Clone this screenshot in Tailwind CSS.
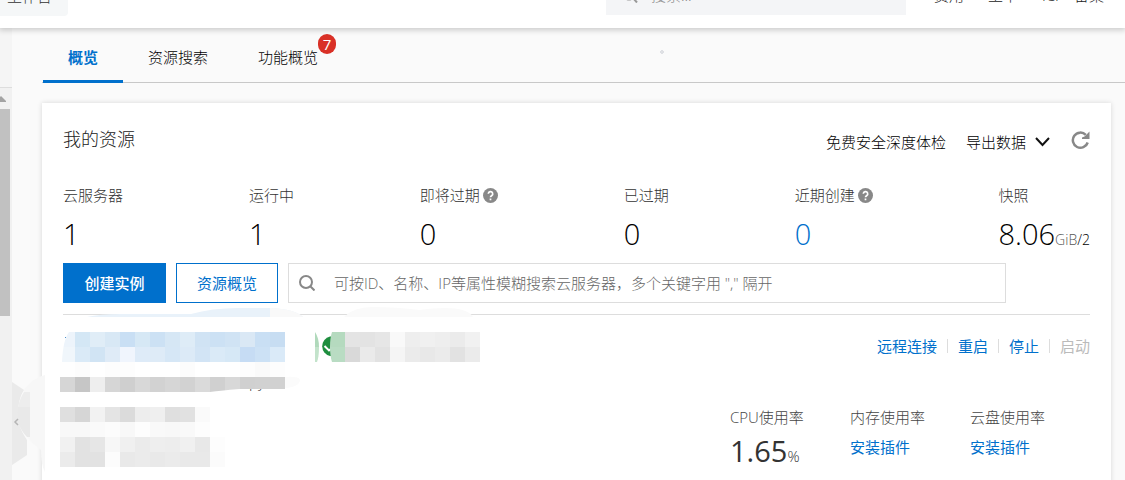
<!DOCTYPE html>
<html lang="zh-CN">
<head>
<meta charset="utf-8">
<meta name="viewport" content="width=device-width, initial-scale=1">
<title>概览</title>
<script src="https://cdn.jsdelivr.net/npm/@tailwindcss/browser@4"></script>
</head>
<body class="flex h-screen flex-col overflow-hidden bg-[#fafafa] font-['Open_Sans','Noto_Sans_CJK_SC',sans-serif] text-[15px] leading-6 font-light text-[#222]">

<!-- Top bar, scrolled partly out of view -->
<header class="relative z-10 -mt-[22px] flex h-[50px] shrink-0 items-start bg-white shadow-[0_1px_6px_1px_rgba(0,0,0,0.2)]">
  <a href="#" class="flex h-[38px] w-[68px] items-center rounded-br-sm bg-[#f5f7f8] pl-[7px] pb-[2px] text-[#333]">工作台</a>
  <label class="ml-auto flex h-[37px] w-[300px] items-center gap-[13px] bg-[#f4f5f7] pl-4 pb-[3px]">
    <svg class="size-4 shrink-0" viewBox="0 0 16 16" fill="none" stroke="#999" stroke-width="2"><circle cx="7" cy="7" r="5.5"/><path d="M11 11l4 4.5"/></svg>
    <input type="text" aria-label="搜索" placeholder="搜索..." class="w-full bg-transparent outline-none placeholder:text-[#888]">
  </label>
  <nav class="ml-[27px] mr-[21px] flex h-[34px] items-center gap-6 pl-px whitespace-nowrap text-[#222]">
    <a href="#">费用</a><a href="#">工单</a><a href="#" class="flex w-[62px] justify-between"><span>ICP</span> <span>备案</span></a>
  </nav>
</header>

<div class="flex min-h-0 flex-1">
  <!-- Sidebar edge with its scrollbar -->
  <aside class="relative flex w-3 shrink-0 flex-col bg-[#f1f1f1]">
    <div class="h-[60px] border-b border-[#ddd] bg-[#f5f5f5]"></div>
    <svg class="mt-2 h-[6px] w-[6px]" viewBox="0 0 6 6" fill="#a3a3a3"><path d="M0 1L1 0L6 5V6H0z"/></svg>
    <div class="mt-[7px] h-[207px] w-[10px] bg-[#c1c1c1]"></div>
    <svg class="absolute left-3 top-[346px] z-10 h-[100px] w-[33px]" viewBox="12 374 33 100">
      <path d="M24 390Q34 377 45 375V472Q41 465 41 450Q34 445 27 437z" fill="#f7f7f7"/>
      <path d="M12 382L24 390Q17 400 18 422Q22 433 27 440V455L12 465z" fill="#eaeaea"/>
      <path d="M24 392H30V407H18Q20 398 24 392z" fill="#ededed"/>
      <path d="M18 407H30V437H27Q20 430 17 420z" fill="#e9e9e9"/>
      <path d="M18 419L15 422L18 425" fill="none" stroke="#b5b5b5" stroke-width="1.5"/>
    </svg>
  </aside>

  <main class="min-w-0 flex-1 pl-[30px]">
    <nav class="relative flex h-[55px] border-b border-[#c8c8c8] pl-px text-black">
      <a href="#" class="-mb-px flex items-center border-b-3 border-[#0070cc] px-[25px] pt-[5px] font-semibold text-[#0070cc]">概览</a>
      <a href="#" class="flex items-center px-[25px] pt-[3px]">资源搜索</a>
      <a href="#" class="relative flex items-center px-[25px] pt-[3px]">功能概览<span class="absolute right-[7px] top-[6px] flex h-5 w-[18px] items-center justify-center rounded-full bg-[#d93026] font-normal text-white">7</span></a>
      <svg class="absolute left-[617px] top-[21px] size-[6px]" viewBox="0 0 6 6" fill="none" stroke="#cdd0d6"><circle cx="3" cy="3" r="1.3"/></svg>
    </nav>

    <section class="relative mr-[14px] mt-5 min-h-[400px] bg-white px-[21px] pt-[21px] shadow-[0_0_5px_rgba(0,0,0,0.14)]">
      <div class="flex h-8 items-center">
        <h1 class="-mt-[2px] text-[18px]">我的资源</h1>
        <div class="ml-auto flex items-center pt-1 text-black">
          <a href="#">免费安全深度体检</a>
          <button type="button" class="ml-5 flex items-center gap-[9px]">导出数据
            <svg class="h-[10px] w-[15px]" viewBox="0 0 15 10" fill="none" stroke="#111" stroke-width="2"><path d="M1 1L7.500 8L14 1"/></svg>
          </button>
          <button type="button" aria-label="刷新" class="-mt-[3px] ml-[21px]">
            <svg class="size-[19px]" viewBox="0 0 19 19"><path d="M14.800 3.800A7.600 7.600 0 1 0 16.700 11.500" fill="none" stroke="#888" stroke-width="2.500"/><path d="M18.500 0.500V8H11V6.500L13.500 5.500z" fill="#888"/></svg>
          </button>
        </div>
      </div>

      <dl class="mt-[27px] flex justify-between text-[#333]">
        <div><dt>云服务器</dt><dd class="mt-[7px] h-10 text-[29px] leading-10 text-black">1</dd></div>
        <div><dt>运行中</dt><dd class="mt-[7px] h-10 text-[29px] leading-10 text-black">1</dd></div>
        <div><dt class="flex items-center gap-[3px]">即将过期<svg class="size-[15px]" viewBox="0 0 15 15"><circle cx="7.500" cy="7.500" r="7.500" fill="#888"/><path d="M5.300 5.800a2.200 2.200 0 1 1 3.300 1.900c-.8.500-1.100.8-1.100 1.600M7.500 10.500v1.700" fill="none" stroke="#fff" stroke-width="1.700"/></svg></dt><dd class="mt-[7px] h-10 text-[29px] leading-10 text-black">0</dd></div>
        <div><dt>已过期</dt><dd class="mt-[7px] h-10 text-[29px] leading-10 text-black">0</dd></div>
        <div><dt class="flex items-center gap-[3px]">近期创建<svg class="size-[15px]" viewBox="0 0 15 15"><circle cx="7.500" cy="7.500" r="7.500" fill="#888"/><path d="M5.300 5.800a2.200 2.200 0 1 1 3.300 1.900c-.8.500-1.100.8-1.100 1.600M7.500 10.500v1.700" fill="none" stroke="#fff" stroke-width="1.700"/></svg></dt><dd class="mt-[7px] h-10 text-[29px] leading-10 text-[#0070cc]"><a href="#">0</a></dd></div>
        <div><dt>快照</dt><dd class="mt-[7px] flex h-10 items-baseline text-[29px] leading-10 text-black">8.06<span class="text-[14px] text-[#555]">GiB</span><span class="text-[14px] text-black">/2</span></dd></div>
      </dl>

      <div class="mt-[9px] flex h-10 gap-[10px]">
        <button type="button" class="w-[103px] bg-[#0070cc] pb-px font-medium text-white">创建实例</button>
        <button type="button" class="w-[102px] border border-[#0070cc] pb-px font-normal text-[#0070cc]">资源概览</button>
        <label class="mr-[84px] flex min-w-0 flex-1 items-center gap-[19px] border border-[#ddd] pl-[10px]">
          <svg class="size-4 shrink-0" viewBox="0 0 16 16" fill="none" stroke="#888" stroke-width="2"><circle cx="7" cy="7" r="6"/><path d="M11 11l4.500 4.500"/></svg>
          <input type="text" aria-label="搜索云服务器" placeholder="可按ID、名称、IP等属性模糊搜索云服务器，多个关键字用 &quot;,&quot; 隔开" class="min-w-0 flex-1 bg-transparent outline-none placeholder:text-[#666]">
        </label>
      </div>

      <div class="relative mt-[11px] border-t border-[#ddd]">
        <svg class="absolute left-0 -top-[8px] h-[12px] w-[420px]" viewBox="63 307 420 12">
          <path d="M87 317Q100 314 120 314H191Q215 307 245 308H270Q295 309 303 317z" fill="#e9f2fa"/>
          <path d="M270 308Q295 309 303 317H270z" fill="#f9f9f9"/>
          <path d="M344 317Q354 307 372 307Q395 307 420 310Q465 304 473 317z" fill="#fafafa"/>
        </svg>
      </div>

      <article class="mt-[17px] flex justify-between">
        <!-- Pixelated instance name, status and address -->
        <svg id="masked" class="h-[135px] w-[422px] shrink-0 overflow-visible" viewBox="63 332 422 135" role="img" aria-label="实例信息">
          <defs><clipPath id="line"><path d="M240 380H300V392H240z"/></clipPath></defs>
          <text x="249" y="388" font-size="15" fill="#333" clip-path="url(#line)">py</text>
          <g id="cells" shape-rendering="crispEdges"></g>
          <path d="M60 332H69Q63 340 62 362H60z" fill="#fff"/>
          <path d="M210 392Q235 389 240 389V392.500H210z" fill="#fff"/>
          <path d="M285 377Q299 376 300 380Q299 387 285 388z" fill="#fbfbfb"/>
          <path d="M65 337h1v1h-1z" fill="#4f91cc"/>
          <path d="M315 332Q319 338 319 347H315z" fill="#b0d9bb"/>
          <path d="M315 347H319Q319 357 317 362H315z" fill="#c3e3cb"/>
          <path d="M332 336.500H330A10 10 0 0 0 330 356H332z" fill="#1e8e3e"/>
          <path d="M324.500 346L329 350.500L332 348" fill="none" stroke="#fff" stroke-width="2"/>
          <path d="M332 332H345V347H330Q330 338 332 332z" fill="#b5dabf"/>
          <path d="M330 347H345V362H332Q330 356 330 347z" fill="#b9dcc3"/>
        </svg>
        <div>
          <div class="flex items-center justify-end gap-[10px] pt-[2px] font-normal text-[#0070cc]">
            <a href="#">远程连接</a><span class="h-[14px] w-px bg-[#ddd]"></span>
            <a href="#">重启</a><span class="h-[14px] w-px bg-[#ddd]"></span>
            <a href="#">停止</a><span class="h-[14px] w-px bg-[#ddd]"></span>
            <button type="button" disabled class="text-[#bbb]">启动</button>
          </div>
          <dl class="mt-[47px] grid grid-cols-[120px_120px_120px] text-[#444]">
            <div><dt>CPU使用率</dt><dd class="mt-[2px] text-[29px] leading-10 font-normal text-[#333]">1.65<span class="text-[15px] font-light">%</span></dd></div>
            <div><dt>内存使用率</dt><dd class="mt-[6px]"><a href="#" class="font-normal text-[#0070cc]">安装插件</a></dd></div>
            <div><dt>云盘使用率</dt><dd class="mt-[6px]"><a href="#" class="font-normal text-[#0070cc]">安装插件</a></dd></div>
          </dl>
        </div>
      </article>
    </section>
  </main>
</div>

<script>
  // Each row: left edge, top edge, height, then the fill of every 15-unit cell.
  const rows = [
    [60, 332, 15, "edf4fb d4e7f5 e0edf7 d8e8f5 c9dff4 d6e8f5 cce1f4 d6e7f5 deecf7 d0e3f4 cce1f4 d0e3f4 dae8f5 c9dff4 c7ddf2"],
    [60, 347, 15, "f0f6fb daeaf7 d1e4f4 dfebf7 f0f5fd deebf8 deebf7 d6e7f6 dceaf7 d2e4f5 daeaf7 d6e8f6 c6dcf4 cce1f5 daeaf8"],
    [60, 362, 15, "fefefe fcfcfc ffffff fdfdfd fdfdfd ffffff ffffff ffffff fcfcfc ffffff ffffff ffffff fdfdfd fafafa fdfdfd"],
    [60, 377, 15, "d6d6d6 c6c6c6 eeeeee d6d6d6 cfcfcf d8d8d8 d2d2d2 d6d6d6 d2d2d2 dadada d0d0d0 d8d8d8"],
    [240, 377, 12, "d0d0d0 d1d1d1 d1d1d1"],
    [60, 407, 15, "dfdfdf d6d6d6 f2f2f2 e4e4e4 dbdbdb ededed efefef dfdfdf e1e1e1 fafafa"],
    [60, 422, 15, "f8f8f8 f8f8f8 fafafa fcfcfc f8f8f8 fdfdfd f9f9f9 f8f8f8 f9f9f9 fdfdfd"],
    [60, 437, 15, "f1f1f1 e2e2e2 e6e6e6 f7f7f7 f0f0f0 ebebeb eeeeee ededed f0f0f0 e8e8e8 fdfdfd"],
    [60, 452, 15, "ebebeb e2e2e2 e2e2e2 fcfcfc e9e9e9 ebebeb e9e9e9 ebebeb e9e9e9 e9e9e9 fbfbfb"],
    [345, 332, 15, "e4e4e4 e3e3e3 e6e6e6 f9f9f9 eeeeee f0f0f0 eeeeee ebebeb f1f1f1"],
    [345, 347, 15, "d9d9d9 eaeaea e2e2e2 f5f5f5 ebebeb e8e8e8 ebebeb e2e2e2 ebebeb"]
  ];
  const cells = document.getElementById("cells");
  for (const [left, top, height, fills] of rows) {
    fills.split(" ").forEach((fill, i) => {
      const r = document.createElementNS("http://www.w3.org/2000/svg", "rect");
      r.setAttribute("x", left + i * 15);
      r.setAttribute("y", top);
      r.setAttribute("width", 15);
      r.setAttribute("height", height);
      r.setAttribute("fill", "#" + fill);
      cells.appendChild(r);
    });
  }
</script>
</body>
</html>
